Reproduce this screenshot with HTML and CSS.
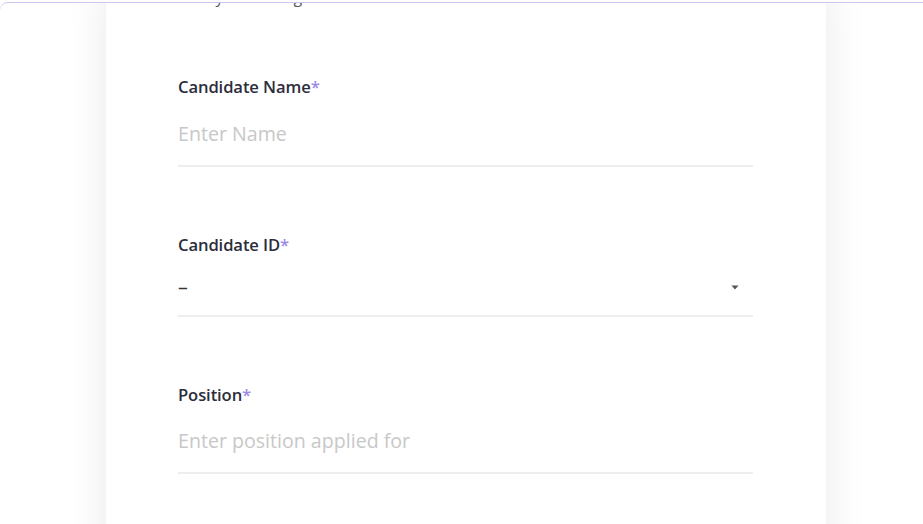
FILE: index.html
```html
<!DOCTYPE html>
<html lang="en">
<head>
<meta charset="utf-8">
<title>Candidate Form</title>
<link rel="stylesheet" href="styles.css">
</head>
<body>
<div class="frame">
  <main class="card">
    <p class="intro">Kindly fill the registration form below</p>
    <div class="field first">
      <label class="label">Candidate Name<span class="req">*</span></label>
      <div class="input placeholder">Enter Name</div>
    </div>
    <div class="field">
      <label class="label">Candidate ID<span class="req">*</span></label>
      <div class="input select">
        <span class="value">–</span>
        <svg class="caret" width="8" height="5" viewBox="0 0 8 5"><path d="M0.5 0.5h7L4 4.5z" fill="#555"/></svg>
      </div>
    </div>
    <div class="field">
      <label class="label">Position<span class="req">*</span></label>
      <div class="input placeholder pos">Enter position applied for</div>
    </div>
  </main>
</div>
</body>
</html>
```
FILE: styles.css
```css
html, body {
  margin: 0;
  padding: 0;
  height: 100%;
  overflow: hidden;
  background: #ffffff;
}
body {
  font-family: "Open Sans", "Noto Sans", sans-serif;
}
.frame {
  margin-top: 2px;
  height: 600px;
  border-top: 1px solid #cdc6f2;
  border-top-left-radius: 8px;
  overflow: hidden;
}
.card {
  width: 720px;
  margin-left: 106px;
  min-height: 600px;
  background: #fff;
  box-shadow: 0 0 40px rgba(0, 0, 0, 0.09);
  padding: 0 73px 0 72px;
  box-sizing: border-box;
}
.intro {
  margin: -16px 0 0 0;
  font-size: 16px;
  line-height: 20px;
  color: #555a66;
}
.field {
  display: flex;
  flex-direction: column;
  margin-top: 68px;
}
.field.first {
  margin-top: 70px;
}
.label {
  font-size: 16.6px;
  line-height: 20px;
  font-weight: 600;
  color: #2b2d3b;
  letter-spacing: -0.1px;
}
.req {
  color: #9a8ae6;
}
.input {
  font-size: 19.6px;
  line-height: 24px;
  padding: 25px 0 19px;
  border-bottom: 2px solid #eeeeee;
}
.placeholder {
  color: #c8c8c8;
}
.pos {
  padding-top: 24px;
}
.select {
  display: flex;
  align-items: center;
  justify-content: space-between;
  padding: 20px 14px 16px 0;
  color: #333;
}
.caret {
  display: block;
}
```
